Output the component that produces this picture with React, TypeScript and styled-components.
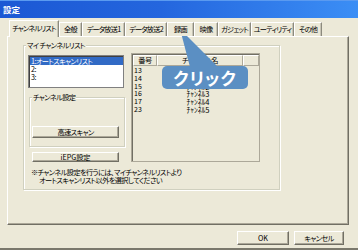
import styled, { createGlobalStyle } from "styled-components";

const GlobalStyle = createGlobalStyle`
  html, body { margin: 0; padding: 0; background: #ece9d8; }
  body {
    font-family: "Noto Sans CJK JP", "Noto Sans", sans-serif;
    font-feature-settings: "palt";
    letter-spacing: -0.6px;
    color: #000;
  }
`;

const tabs = [
  { label: "チャンネルリスト", w: 50, active: true },
  { label: "全般", w: 23 },
  { label: "データ放送1", w: 43 },
  { label: "データ放送2", w: 42 },
  { label: "録画", w: 27 },
  { label: "映像", w: 24 },
  { label: "ガジェット", w: 33 },
  { label: "ユーティリティ", w: 43 },
  { label: "その他", w: 28 },
];

const channels = [
  { no: "13", name: "ﾁｬﾝﾈﾙ0" },
  { no: "14", name: "ﾁｬﾝﾈﾙ1" },
  { no: "15", name: "ﾁｬﾝﾈﾙ2" },
  { no: "16", name: "ﾁｬﾝﾈﾙ3" },
  { no: "17", name: "ﾁｬﾝﾈﾙ4" },
  { no: "23", name: "ﾁｬﾝﾈﾙ5" },
];

export default function App() {
  return (
    <>
      <GlobalStyle />
      <Window>
        <TitleBar>設定</TitleBar>
        <Body>
          <TabStrip>
            {tabs.map((t) => (
              <Tab key={t.label} $w={t.w} $active={!!t.active}>
                {t.label}
              </Tab>
            ))}
          </TabStrip>
          <Panel>
            <GroupBox $w={257} $h={145}>
              <Caption>マイ チャンネルリスト</Caption>
              <Columns>
                <LeftColumn>
                  <ListBox>
                    <ListItem $selected>1:オートスキャンリスト</ListItem>
                    <ListItem>2:</ListItem>
                    <ListItem>3:</ListItem>
                  </ListBox>
                  <SubGroup>
                    <Caption>チャンネル設定</Caption>
                    <PushButton $w={87} $h={12}>高速スキャン</PushButton>
                  </SubGroup>
                  <PushButton $w={87} $h={10} $latin style={{ marginTop: 5, marginLeft: 4 }}>
                    iEPG設定
                  </PushButton>
                </LeftColumn>
                <ListView>
                  <Header>
                    <HeaderCell $w={24}>番号</HeaderCell>
                    <HeaderCell $w={87}>チャンネル名</HeaderCell>
                    <HeaderCell $w={16} />
                  </Header>
                  {channels.map((c) => (
                    <Row key={c.no}>
                      <NoCell>{c.no}</NoCell>
                      <NameCell>{c.name}</NameCell>
                    </Row>
                  ))}
                </ListView>
              </Columns>
              <Note>
                <span>※チャンネル設定を行うには、マイチャンネルリストより</span>
                <span>オートスキャンリスト以外を選択してください</span>
              </Note>
            </GroupBox>
          </Panel>
          <Footer>
            <PushButton $w={52} $h={14} $latin>OK</PushButton>
            <PushButton $w={50} $h={14}>キャンセル</PushButton>
          </Footer>
        </Body>

        <Pointer width="60" height="40" viewBox="0 0 60 40">
          <polygon points="2,0 12,38 40,38" fill="#5b8fc3" />
        </Pointer>
        <Callout>クリック</Callout>
      </Window>
    </>
  );
}

const Window = styled.div`
  position: relative;
  width: 358px;
  height: 250px;
  box-sizing: border-box;
  background: #ece9d8;
  border-bottom: 2px solid #7a786c;
  overflow: hidden;
`;

const TitleBar = styled.div`
  height: 18px;
  padding-left: 3px;
  background: linear-gradient(90deg, #1b58d4 0%, #2466de 45%, #3b8ef5 100%);
  box-shadow: inset 0 1px 0 #5a9af0;
  color: #fff;
  font-size: 8.5px;
  font-weight: bold;
  letter-spacing: 0;
  line-height: 19px;
`;

const Body = styled.div`
  padding: 2px 9px 0 7px;
`;

const TabStrip = styled.div`
  display: flex;
  align-items: flex-end;
  height: 16px;
  padding-left: 2px;
  position: relative;
  z-index: 1;
`;

const Tab = styled.div<{ $w: number; $active: boolean }>`
  box-sizing: border-box;
  width: ${(p) => p.$w}px;
  height: ${(p) => (p.$active ? 17 : 14)}px;
  margin-bottom: ${(p) => (p.$active ? -1 : 0)}px;
  background: #ece9d8;
  border-top: 1px solid #fff;
  border-left: 1px solid #fff;
  border-right: 1px solid #8c8a7e;
  box-shadow: inset -1px 0 0 #c8c5b6;
  font-size: 7.2px;
  letter-spacing: -0.8px;
  line-height: ${(p) => (p.$active ? 15 : 12)}px;
  text-align: center;
  white-space: nowrap;
  overflow: hidden;
`;

const Panel = styled.div`
  box-sizing: border-box;
  width: 342px;
  height: 189px;
  border-top: 1px solid #fff;
  border-left: 1px solid #fff;
  border-right: 1px solid #716f64;
  border-bottom: 1px solid #716f64;
  box-shadow: inset -1px -1px 0 #aca899;
  padding: 8px 0 0 15px;
`;

const GroupBox = styled.div<{ $w: number; $h: number }>`
  position: relative;
  box-sizing: border-box;
  width: ${(p) => p.$w}px;
  height: ${(p) => p.$h}px;
  border: 1px solid #d0d0bf;
  box-shadow: 1px 1px 0 #fff, inset 1px 1px 0 #fff;
  padding: 7px 0 0 4px;
`;

const Caption = styled.span`
  position: absolute;
  top: -5px;
  left: 2px;
  padding: 0 1px;
  background: #ece9d8;
  font-size: 7.2px;
  line-height: 9px;
  white-space: pre;
`;

const Columns = styled.div`
  display: flex;
  align-items: flex-start;
`;

const LeftColumn = styled.div`
  display: flex;
  flex-direction: column;
  width: 97px;
  padding-top: 2px;
`;

const ListBox = styled.div`
  box-sizing: border-box;
  width: 96px;
  height: 33px;
  background: #fff;
  border: 1px solid #808080;
  box-shadow: inset 1px 1px 0 #404040;
  padding: 1px 0 0 1px;
`;

const ListItem = styled.div<{ $selected?: boolean }>`
  height: 8px;
  font-size: 7.2px;
  line-height: 8px;
  padding-left: 1px;
  white-space: nowrap;
  background: ${(p) => (p.$selected ? "#316ac5" : "transparent")};
  color: ${(p) => (p.$selected ? "#fff" : "#000")};
`;

const SubGroup = styled.div`
  position: relative;
  box-sizing: border-box;
  width: 96px;
  height: 50px;
  margin: 9px 0 0 1px;
  border: 1px solid #d0d0bf;
  box-shadow: 1px 1px 0 #fff, inset 1px 1px 0 #fff;
  padding: 28px 0 0 2px;
`;

const PushButton = styled.div<{ $w: number; $h: number; $latin?: boolean }>`
  box-sizing: border-box;
  width: ${(p) => p.$w}px;
  height: ${(p) => p.$h}px;
  background: #ece9d8;
  border-top: 1px solid #fff;
  border-left: 1px solid #fff;
  border-right: 1px solid #716f64;
  border-bottom: 1px solid #716f64;
  box-shadow: inset -1px -1px 0 #aca899;
  font-size: 7.2px;
  letter-spacing: ${(p) => (p.$latin ? "0" : "-0.6px")};
  line-height: ${(p) => p.$h - 2}px;
  text-align: center;
  white-space: nowrap;
`;

const ListView = styled.div`
  box-sizing: border-box;
  width: 129px;
  height: 109px;
  margin-left: 6px;
  border: 1px solid #aca899;
  box-shadow: inset 1px 1px 0 #716f64;
  background: #ece9d8;
  padding: 1px 0 0 1px;
`;

const Header = styled.div`
  display: flex;
  height: 11px;
  margin-bottom: 1px;
`;

const HeaderCell = styled.div<{ $w: number }>`
  box-sizing: border-box;
  width: ${(p) => p.$w}px;
  height: 11px;
  border-top: 1px solid #fff;
  border-left: 1px solid #fff;
  border-right: 1px solid #aca899;
  border-bottom: 1px solid #aca899;
  font-size: 7.2px;
  line-height: 9px;
  text-align: center;
  white-space: nowrap;
`;

const Row = styled.div`
  display: flex;
  height: 7.75px;
  font-size: 7.5px;
  letter-spacing: 0;
  line-height: 7.75px;
`;

const NoCell = styled.div`
  width: 24px;
  padding-left: 1px;
  font-size: 7px;
`;

const NameCell = styled.div`
  width: 80px;
  text-align: center;
  white-space: nowrap;
`;

const Note = styled.div`
  display: flex;
  flex-direction: column;
  align-items: flex-start;
  margin: 6px 0 0 3px;
  font-size: 7.2px;
  line-height: 8px;
  white-space: nowrap;

  span + span {
    margin-left: 8px;
  }
`;

const Footer = styled.div`
  display: flex;
  justify-content: flex-end;
  gap: 5px;
  padding-right: 5px;
  margin-top: 6px;
`;

const Pointer = styled.svg`
  position: absolute;
  left: 178px;
  top: 29px;
`;

const Callout = styled.div`
  position: absolute;
  left: 162px;
  top: 66px;
  width: 86px;
  height: 23px;
  border-radius: 5px;
  background: #5b8fc3;
  color: #fff;
  font-size: 17px;
  font-weight: bold;
  line-height: 23px;
  letter-spacing: 1px;
  text-align: center;
`;
